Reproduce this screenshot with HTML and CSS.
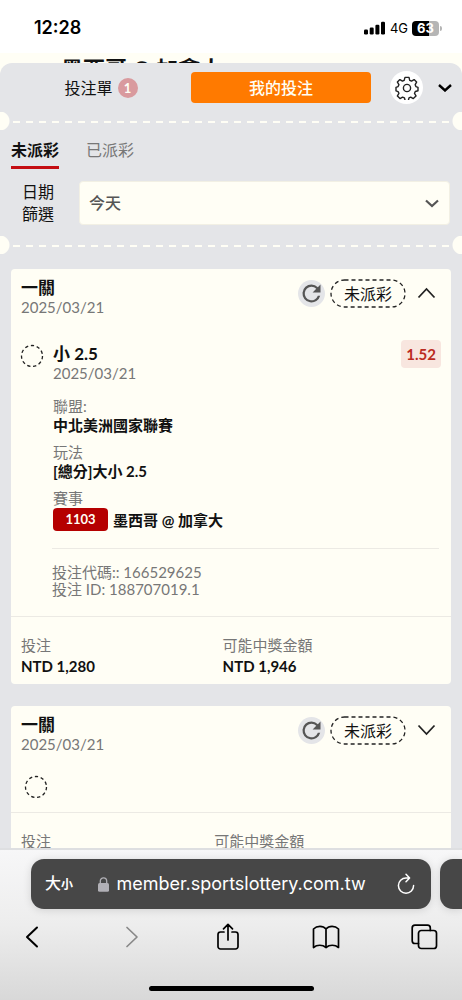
FILE: index.html
```html
<!DOCTYPE html>
<html lang="zh-Hant">
<head>
<meta charset="utf-8">
<meta name="viewport" content="width=device-width, initial-scale=1">
<title>我的投注</title>
<link rel="stylesheet" href="styles.css">
</head>
<body>
<div class="status">
  <span class="clock">12:28</span>
  <div class="status-right">
    <svg width="22" height="14" viewBox="0 0 22 14"><rect x="0" y="8.5" width="4" height="5" rx="1.2"/><rect x="5.7" y="6.5" width="4" height="7" rx="1.2"/><rect x="11.4" y="3.8" width="4" height="9.700" rx="1.2"/><rect x="17" y=".8" width="4" height="12.700" rx="1.2"/></svg>
    <span class="network">4G</span>
    <div class="battery"><span class="battery-body">63</span><span class="battery-tip"></span></div>
  </div>
</div>
<div class="peek">墨西哥 @ 加拿大</div>
<main class="sheet">
  <header class="sheet-head">
    <button class="mode" type="button">投注單<span class="count">1</span></button>
    <button class="mode mode-active" type="button">我的投注</button>
    <button class="gear" type="button" aria-label="設定">
      <svg width="24" height="24" viewBox="0 0 24 24" fill="none" stroke="#222" stroke-width="1.4" stroke-linejoin="round"><circle cx="12" cy="12" r="3.6"/><path d="M10 1.400h4l.7 2.900 1.800.8 2.600-1.500 2.500 2.500-1.400 2.600.7 1.900 2.100.7v3.500l-2.700.7-.8 1.800 1.500 2.600-2.700 2.700-2.600-1.500-1.700.8-.7 2.700h-3.100l-.8-2.800-1.800-.7-2.600 1.500-2.600-2.700 1.500-2.600-.8-1.700-2.100-.8v-3.500l2.100-.7.8-1.900-1.500-2.600L4.900 3.600l2.600 1.500 1.700-.8z"/></svg>
    </button>
    <button class="collapse" type="button" aria-label="收合">
      <svg width="14" height="8" viewBox="0 0 14 8" fill="none" stroke="#000" stroke-width="2.4"><path d="M1 1l6 5.500L13 1"/></svg>
    </button>
  </header>
  <div class="perforation"></div>
  <nav class="tabs">
    <button class="tab tab-active" type="button">未派彩</button>
    <button class="tab" type="button">已派彩</button>
  </nav>
  <div class="filter">
    <label class="filter-label" for="range">日期<br>篩選</label>
    <div class="select-wrap">
      <select id="range"><option>今天</option></select>
      <svg class="select-arrow" width="14" height="9" viewBox="0 0 14 9" fill="none" stroke="#555" stroke-width="2.200"><path d="M1 1.500l6 5.500 6-5.500"/></svg>
    </div>
  </div>
  <div class="perforation"></div>

  <section class="list">
    <article class="card">
      <div class="card-head">
        <div class="names"><h2>一關</h2><p>2025/03/21</p></div>
        <button class="refresh" type="button" aria-label="重新整理"><svg width="27" height="27" viewBox="0 0 24 24"><path fill="#555" d="M17.650 6.350A7.960 7.960 0 0 0 12 4a8 8 0 1 0 7.730 10h-2.080A6 6 0 1 1 12 6c1.660 0 3.140.69 4.220 1.780L13 11h7V4z"/></svg></button>
        <span class="pill"><svg class="pill-line" width="76" height="29" viewBox="0 0 76 29"><rect x="1" y="1" width="74" height="27" rx="13.500"/></svg><span>未派彩</span></span>
        <button class="toggle" type="button" aria-label="收合"><svg width="19" height="12" viewBox="0 0 19 12"><path d="M1.500 10.500l8-8.500 8 8.500"/></svg></button>
      </div>
      <div class="leg">
        <svg class="ring" width="24" height="24" viewBox="0 0 24 24"><circle cx="12" cy="12" r="10.500"/></svg>
        <div class="leg-body">
          <div class="leg-title">
            <div class="names"><h3>小 2.5</h3><p>2025/03/21</p></div>
            <span class="odds">1.52</span>
          </div>
          <dl class="facts">
            <div><dt>聯盟:</dt><dd>中北美洲國家聯賽</dd></div>
            <div><dt>玩法</dt><dd>[總分]大小 2.5</dd></div>
            <div><dt>賽事</dt><dd class="match"><span class="code">1103</span>墨西哥 @ 加拿大</dd></div>
          </dl>
        </div>
      </div>
      <div class="ids"><p>投注代碼:: 166529625</p><p>投注 ID: 188707019.1</p></div>
      <dl class="totals">
        <div><dt>投注</dt><dd>NTD 1,280</dd></div>
        <div><dt>可能中獎金額</dt><dd>NTD 1,946</dd></div>
      </dl>
    </article>

    <article class="card">
      <div class="card-head">
        <div class="names"><h2>一關</h2><p>2025/03/21</p></div>
        <button class="refresh" type="button" aria-label="重新整理"><svg width="27" height="27" viewBox="0 0 24 24"><path fill="#555" d="M17.650 6.350A7.960 7.960 0 0 0 12 4a8 8 0 1 0 7.730 10h-2.080A6 6 0 1 1 12 6c1.660 0 3.140.69 4.220 1.780L13 11h7V4z"/></svg></button>
        <span class="pill"><svg class="pill-line" width="76" height="29" viewBox="0 0 76 29"><rect x="1" y="1" width="74" height="27" rx="13.500"/></svg><span>未派彩</span></span>
        <button class="toggle" type="button" aria-label="展開"><svg width="19" height="12" viewBox="0 0 19 12"><path d="M1.500 1.500l8 8.500 8-8.500"/></svg></button>
      </div>
      <div class="folded"><svg class="ring" width="24" height="24" viewBox="0 0 24 24"><circle cx="12" cy="12" r="10.500"/></svg></div>
      <dl class="totals totals-folded">
        <div><dt>投注</dt></div>
        <div><dt>可能中獎金額</dt></div>
      </dl>
    </article>
  </section>
</main>

<footer class="browser">
  <div class="address-row">
    <div class="address">
      <button class="text-size" type="button">大<small>小</small></button>
      <span class="url"><svg width="11" height="15" viewBox="0 0 11 15"><rect x="0" y="6" width="11" height="8.700" rx="1.500" fill="#b1b0b6"/><path d="M2.300 6.500V4a3.200 3.200 0 0 1 6.400 0v2.500" fill="none" stroke="#b1b0b6" stroke-width="1.300"/></svg>member.sportslottery.com.tw</span>
      <button class="reload" type="button" aria-label="重新載入"><svg width="18" height="22" viewBox="0 0 18 22" fill="none" stroke="#fff" stroke-width="1.500" stroke-linecap="round" stroke-linejoin="round"><path d="M12.400 5H9a7.600 7.600 0 1 0 7.600 7.600M9 1.200L12.600 5 9 8.700"/></svg></button>
    </div>
    <div class="next-tab"></div>
  </div>
  <nav class="toolbar">
    <button type="button" aria-label="上一頁"><svg width="28" height="28" viewBox="0 0 28 28"><path d="M19 4.500L9 14l10 9.500" stroke-width="2"/></svg></button>
    <button class="dim" type="button" aria-label="下一頁"><svg width="28" height="28" viewBox="0 0 28 28"><path d="M11 4.500L21 14 11 23.500"/></svg></button>
    <button type="button" aria-label="分享"><svg width="28" height="28" viewBox="0 0 28 28"><path d="M10 9H6.500a2.500 2.500 0 0 0-2.500 2.500v12A2.500 2.500 0 0 0 6.500 26h15a2.500 2.500 0 0 0 2.500-2.500v-12A2.500 2.500 0 0 0 21.500 9H18M14 17V1.500M9.500 5.800L14 1.300l4.500 4.500"/></svg></button>
    <button type="button" aria-label="書籤"><svg width="28" height="28" viewBox="0 0 28 28"><path d="M14 6v18.500C10.500 21.500 5 21.500 1.500 24.500V6C5 2.500 11 2.500 14 6c3-3.500 9-3.500 12.500 0v18.500C23 21.500 17.500 21.500 14 24.500"/></svg></button>
    <button type="button" aria-label="分頁"><svg width="28" height="28" viewBox="0 0 28 28"><rect x="8.500" y="7.500" width="18" height="18" rx="2.800"/><path d="M8.500 20.500H5a2.800 2.800 0 0 1-2.800-2.800V5A2.800 2.800 0 0 1 5 2.200h12.500A2.800 2.800 0 0 1 20.300 5v2.500"/></svg></button>
  </nav>
  <div class="home-bar"></div>
</footer>
</body>
</html>
```

FILE: styles.css
```css
* { box-sizing: border-box; }
body, h2, h3, p, dl, dd { margin: 0; }
button { border: 0; padding: 0; background: none; color: inherit; font: inherit; }
svg { display: block; flex: none; }

body {
  display: flex;
  flex-direction: column;
  height: 100vh;
  overflow: hidden;
  background: #fffef5;
  color: #111;
  font: 400 16px/20px Lato, "Noto Sans CJK TC", sans-serif;
}

/* Status bar */
.status {
  display: flex;
  flex: none;
  align-items: center;
  justify-content: space-between;
  height: 53px;
  padding: 3px 20px 0 34px;
  background: #fff;
  color: #000;
  font-family: Inter, sans-serif;
}
.clock { font-size: 18px; font-weight: 600; }
.status-right { display: flex; align-items: center; gap: 4px; }
.network { font-size: 13px; }
.battery { display: flex; align-items: center; gap: 1px; }
.battery-body {
  width: 27px;
  border-radius: 4px;
  background: linear-gradient(90deg, #000 63%, #b5b5b5 63%);
  color: #fff;
  font-size: 13px;
  font-weight: 700;
  line-height: 15px;
  text-align: center;
}
.battery-tip { width: 2px; height: 5px; border-radius: 0 2px 2px 0; background: #b5b5b5; }

.peek {
  flex: none;
  height: 10px;
  padding-left: 61px;
  overflow: hidden;
  font-size: 22px;
  font-weight: 700;
  line-height: 32px;
}

/* Betting sheet */
.sheet {
  flex: 1;
  min-height: 0;
  overflow: hidden;
  border-radius: 12px 12px 0 0;
  background: #e4e5e8;
}
.sheet-head { display: flex; align-items: center; padding: 8px 10px 8px 11px; }
.mode {
  display: flex;
  flex: 1;
  align-items: center;
  justify-content: center;
  gap: 5px;
  height: 31px;
  border-radius: 4px;
}
.mode-active { background: #ff7a00; color: #fffef5; font-weight: 500; }
.count {
  width: 20px;
  border-radius: 50%;
  background: #d99a9e;
  color: #fffef5;
  font-size: 13px;
  font-weight: 700;
}
.gear {
  display: grid;
  place-items: center;
  width: 33px;
  height: 33px;
  margin: 0 15px 0 19px;
  border-radius: 50%;
  background: #fff;
}
.perforation {
  height: 18px;
  background:
    radial-gradient(circle at 0 9px, #fffef5 9px, transparent 10px),
    radial-gradient(circle at 100% 9px, #fffef5 9px, transparent 10px),
    repeating-linear-gradient(90deg, #fffef5 0 7px, transparent 7px 13px) 13px 9px / calc(100% - 26px) 2px no-repeat;
}

.tabs { display: flex; gap: 27px; padding: 9px 11px 0; }
.tab { border-bottom: 3px solid transparent; padding: 1px 0 6px; color: #777; }
.tab-active { border-color: #c40d12; color: #111; font-weight: 700; }

.filter { display: flex; align-items: center; padding: 12px 12px 11px 11px; }
.filter-label { flex: none; width: 68px; padding-right: 14px; line-height: 22px; text-align: center; }
.select-wrap { position: relative; flex: 1; }
.select-wrap select {
  display: block;
  width: 100%;
  height: 44px;
  appearance: none;
  border: 1px solid #f2f0e4;
  border-radius: 4px;
  padding: 0 9px;
  background: #fffef5;
  color: #555;
  font: inherit;
  font-weight: 500;
}
.select-arrow { position: absolute; top: 18px; right: 11px; }

/* Bet cards */
.list { display: grid; gap: 22px; padding: 15px 11px 0; }
.card { border-radius: 4px; background: #fffef5; }
.card-head { display: flex; align-items: flex-start; padding: 9px 15px 0 10px; }
.names { flex: 1; }
.names h2, .names h3 { font-size: 17px; line-height: 20px; }
.names p { font-size: 15px; }
.names p, dt, .ids { color: #777; line-height: 18px; }
.refresh {
  display: grid;
  place-items: center;
  width: 27px;
  height: 27px;
  margin: 2px 5px 0 0;
  border-radius: 50%;
  background: #e4e5e8;
}
.pill { display: grid; place-items: center; margin: 1px 11px 0 0; }
.pill > * { grid-area: 1 / 1; }
.pill-line { fill: none; stroke: #222; stroke-width: 1.3; stroke-dasharray: 4 3; }
.toggle { padding-top: 9px; }
.toggle svg { fill: none; stroke: #222; stroke-width: 1.8; }
.ring { fill: none; stroke: #222; stroke-width: 1.3; stroke-dasharray: 3.3 2.7; }

.leg { display: flex; align-items: flex-start; gap: 9px; padding: 28px 10px 0 9px; }
.leg-body { flex: 1; }
.leg-title { display: flex; align-items: flex-start; }
.odds {
  margin-top: -4px;
  border-radius: 4px;
  padding: 0 5px;
  background: #f8e6df;
  color: #bb2b22;
  font-size: 15px;
  font-weight: 700;
  line-height: 28px;
}
.facts { display: grid; gap: 8px; padding-top: 15px; }
dt { font-size: 15px; }
dd { font-size: 15px; font-weight: 700; }
.match { display: flex; align-items: center; gap: 5px; padding-top: 1px; }
.code {
  width: 55px;
  border-radius: 4px;
  background: #b50000;
  color: #fffef5;
  font-size: 13px;
  line-height: 23px;
  text-align: center;
}
.ids {
  margin: 17px 12px 0 41px;
  border-top: 1px solid #eceae4;
  padding: 15px 0 18px;
  font-size: 15px;
  line-height: 17px;
}
.totals { display: grid; grid-template-columns: 48% 1fr; border-top: 1px solid #eceae4; padding: 19px 10px 8px; }
.totals dd { padding-top: 2px; }
.totals-folded { grid-template-columns: 46% 1fr; padding-bottom: 40px; }
.folded { padding: 22px 13px 13px; }

/* Browser chrome */
.browser {
  flex: none;
  border-top: 2px solid #dedfe1;
  padding: 9px 0;
  background: linear-gradient(#f7f7f8, #ededed 50%, #d8d8d8);
  color: #000;
}
.address-row { display: flex; gap: 9px; padding-left: 31px; }
.address, .next-tab { height: 50px; border-radius: 13px; background: #474747; box-shadow: 0 1px 8px #0002; }
.address {
  display: flex;
  flex: 1;
  align-items: center;
  justify-content: space-between;
  padding: 0 16px 0 14px;
  color: #fff;
}
.next-tab { width: 22px; border-radius: 13px 0 0 13px; }
.text-size { font-weight: 500; }
.text-size small { font-size: 12px; font-weight: 700; }
.url { display: flex; align-items: center; gap: 7px; padding-right: 6px; font: 400 18px/24px Inter, sans-serif; }
.toolbar { display: flex; justify-content: space-between; padding: 14px 24px 0 18px; }
.toolbar svg { fill: none; stroke: #000; stroke-width: 1.7; stroke-linecap: round; stroke-linejoin: round; }
.toolbar .dim svg { stroke: #888; }
.home-bar { width: 165px; height: 5px; margin: 35px auto 0; border-radius: 3px; background: #000; }
```
